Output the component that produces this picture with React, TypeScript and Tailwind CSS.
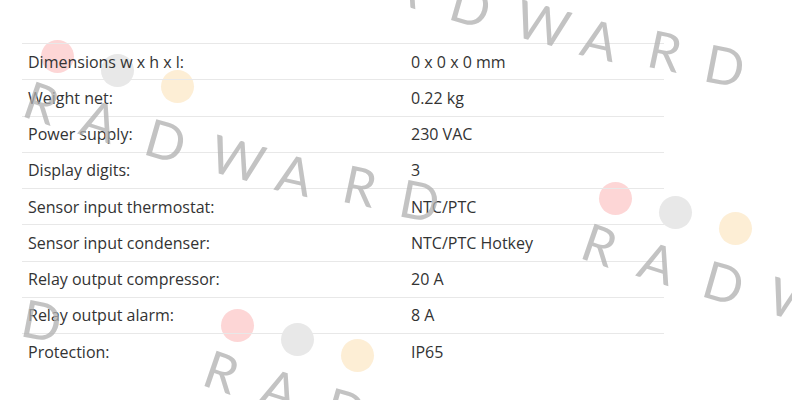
const specs: [string, string][] = [
  ["Dimensions w x h x l:", "0 x 0 x 0 mm"],
  ["Weight net:", "0.22 kg"],
  ["Power supply:", "230 VAC"],
  ["Display digits:", "3"],
  ["Sensor input thermostat:", "NTC/PTC"],
  ["Sensor input condenser:", "NTC/PTC Hotkey"],
  ["Relay output compressor:", "20 A"],
  ["Relay output alarm:", "8 A"],
  ["Protection:", "IP65"],
];

// letter offsets from the first dot centre, with a slight arc
const letters: [string, number, number, number][] = [
  ["R", -15, 46, 19],
  ["A", 43, 64, 18],
  ["D", 109, 84, 16],
  ["W", 181, 102, 15],
  ["A", 238, 118, 13],
  ["R", 303, 129, 12],
  ["D", 363, 144, 11],
];

const dots = [
  { dx: 0, dy: 0, cls: "bg-[#fdd6d6]" },
  { dx: 60, dy: 14, cls: "bg-[#e8e8e8]" },
  { dx: 120, dy: 30, cls: "bg-[#fdeed5]" },
];

const tiles: [number, number][] = [
  [57, 56],
  [615, 198],
  [237, 325],
  [362, -79],
  [-321, 176],
];

function Dots({ x, y }: { x: number; y: number }) {
  return (
    <>
      {dots.map((d, i) => (
        <span
          key={i}
          className={`absolute w-[33px] h-[33px] rounded-full ${d.cls}`}
          style={{ left: x + d.dx - 16.5, top: y + d.dy - 16.5 }}
        />
      ))}
    </>
  );
}

function Letters({ x, y }: { x: number; y: number }) {
  return (
    <>
      {letters.map(([ch, dx, dy, rot], i) => (
        <span
          key={i}
          className="absolute text-[52px] leading-none font-normal text-[#b0b0b0] opacity-75"
          style={{
            left: x + dx,
            top: y + dy,
            transform: `translate(-50%, -50%) rotate(${rot}deg)`,
            fontFamily: "Lato, 'Open Sans', sans-serif",
          }}
        >
          {ch}
        </span>
      ))}
    </>
  );
}

export default function App() {
  return (
    <div className="relative w-[792px] h-[400px] bg-white overflow-hidden" style={{ fontFamily: "'Open Sans', 'Noto Sans', sans-serif" }}>
      <div className="absolute inset-0">
        {tiles.map(([x, y], i) => (
          <Dots key={i} x={x} y={y} />
        ))}
      </div>
      <div className="relative pt-[43px] pl-[22px]">
        <div className="w-[642px] flex flex-col text-[16px] text-[#333333]">
          {specs.map(([label, value]) => (
            <div
              key={label}
              className="grid grid-cols-[389px_1fr] items-center h-[36.25px] border-t border-[#e8e8e8]"
            >
              <span className="pl-[6px]">{label}</span>
              <span>{value}</span>
            </div>
          ))}
        </div>
      </div>
      <div className="absolute inset-0 pointer-events-none">
        {tiles.map(([x, y], i) => (
          <Letters key={i} x={x} y={y} />
        ))}
      </div>
    </div>
  );
}
